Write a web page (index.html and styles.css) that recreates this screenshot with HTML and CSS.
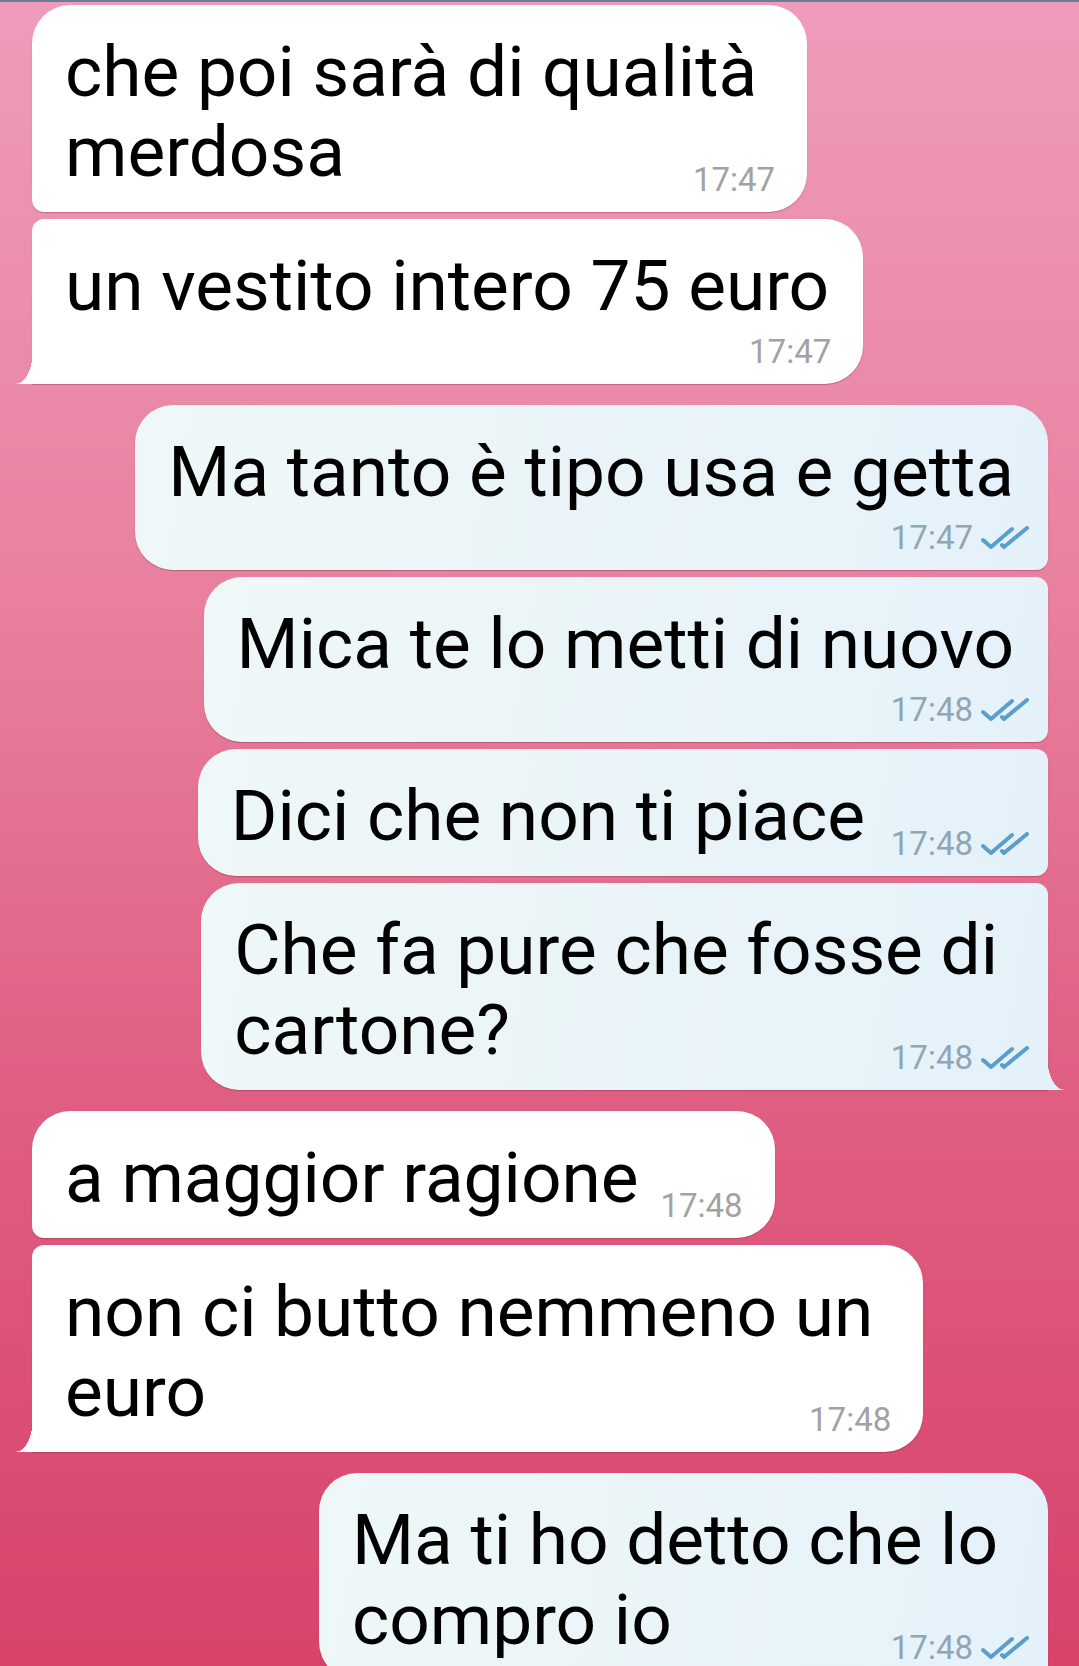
FILE: index.html
```html
<!DOCTYPE html>
<html>
<head>
    <meta charset="UTF-8">
    <title>Chat</title>
    <link rel="stylesheet" href="styles.css">
</head>
<body>
    <div class="topbar"></div>
    <div class="chat">
        <div class="group in">
            <div class="msg first wrap">
                <div class="text">che poi sarà di qualità<br>merdosa</div>
                <div class="meta inline"><span class="time">17:47</span></div>
            </div>
            <div class="msg last">
                <div class="text">un vestito intero 75 euro</div>
                <div class="meta"><span class="time">17:47</span></div>
            </div>
        </div>

        <div class="group out">
            <div class="msg first">
                <div class="text">Ma tanto è tipo usa e getta</div>
                <div class="meta"><span class="time">17:47</span><svg class="check" viewBox="0 0 48 24"><path d="M2 14 L10 21 L31 3 M21 19 L23 21 L46 2"/></svg></div>
            </div>
            <div class="msg">
                <div class="text">Mica te lo metti di nuovo</div>
                <div class="meta"><span class="time">17:48</span><svg class="check" viewBox="0 0 48 24"><path d="M2 14 L10 21 L31 3 M21 19 L23 21 L46 2"/></svg></div>
            </div>
            <div class="msg short">
                <div class="text">Dici che non ti piace</div>
                <div class="meta inline"><span class="time">17:48</span><svg class="check" viewBox="0 0 48 24"><path d="M2 14 L10 21 L31 3 M21 19 L23 21 L46 2"/></svg></div>
            </div>
            <div class="msg last wrap">
                <div class="text">Che fa pure che fosse di<br>cartone?</div>
                <div class="meta inline"><span class="time">17:48</span><svg class="check" viewBox="0 0 48 24"><path d="M2 14 L10 21 L31 3 M21 19 L23 21 L46 2"/></svg></div>
            </div>
        </div>

        <div class="group in">
            <div class="msg first short">
                <div class="text">a maggior ragione</div>
                <div class="meta inline"><span class="time">17:48</span></div>
            </div>
            <div class="msg last wrap">
                <div class="text">non ci butto nemmeno un<br>euro</div>
                <div class="meta inline"><span class="time">17:48</span></div>
            </div>
        </div>

        <div class="group out">
            <div class="msg first wrap">
                <div class="text">Ma ti ho detto che lo<br>compro io</div>
                <div class="meta inline"><span class="time">17:48</span><svg class="check" viewBox="0 0 48 24"><path d="M2 14 L10 21 L31 3 M21 19 L23 21 L46 2"/></svg></div>
            </div>
        </div>
    </div>
</body>
</html>
```

FILE: styles.css
```css
* {
    box-sizing: border-box;
}

body {
    margin: 0;
    width: 1079px;
    height: 1666px;
    overflow: hidden;
    background: linear-gradient(180deg, #ef9bbb 0%, #e8819f 35%, #df5f83 65%, #d9436a 100%);
    font-family: Roboto, 'Noto Sans', sans-serif;
}

.topbar {
    height: 2px;
    background: #6c7d98;
}

.chat {
    display: flex;
    flex-direction: column;
    gap: 21px;
    padding: 3px 31px 0 32px;
}

.group {
    display: flex;
    flex-direction: column;
    gap: 7px;
}

.group.in {
    align-items: flex-start;
}

.group.out {
    align-items: flex-end;
}

.msg {
    position: relative;
    padding: 27px 0 12px 33px;
    border-radius: 38px;
    box-shadow: 0 1px 1px rgba(90, 20, 50, 0.3);
}

.in .msg {
    background: #fff;
    border-bottom-left-radius: 12px;
}

.in .msg + .msg {
    border-top-left-radius: 12px;
}

.out .msg {
    background: linear-gradient(100deg, #eff8f7, #e5f1fa);
    border-bottom-right-radius: 12px;
}

.out .msg + .msg {
    border-top-right-radius: 12px;
}

.in .msg.last {
    border-bottom-left-radius: 0;
}

.out .msg.last {
    border-bottom-right-radius: 0;
}

.in .msg.last::before,
.out .msg.last::after {
    content: '';
    position: absolute;
    bottom: 0;
    width: 17px;
    height: 34px;
}

.in .msg.last::before {
    left: -16px;
    background: radial-gradient(17px 34px at 0 0, transparent 98%, #fff 100%);
}

.out .msg.last::after {
    right: -16px;
    background: radial-gradient(17px 34px at 100% 0, transparent 98%, #e5f1fa 100%);
}

.text {
    font-size: 71.2px;
    line-height: 80px;
    color: #000;
    padding-right: 34px;
    white-space: nowrap;
}

.wrap .text {
    padding-right: 50px;
}

.in .short .text {
    padding-right: 136px;
}

.out .short .text {
    padding-right: 183px;
}

.meta {
    display: flex;
    justify-content: flex-end;
    align-items: center;
    gap: 8px;
    height: 40px;
    margin-top: 6px;
}

.meta.inline {
    margin-top: -32px;
}

.in .meta {
    padding-right: 32px;
}

.out .meta {
    padding-right: 19px;
}

.time {
    font-size: 33px;
    line-height: 40px;
    color: #a2a2a2;
}

.out .time {
    color: #8ea6b5;
}

.check {
    width: 48px;
    height: 24px;
    fill: none;
    stroke: #5a9fcc;
    stroke-width: 4;
    stroke-linecap: round;
    stroke-linejoin: round;
}
```
